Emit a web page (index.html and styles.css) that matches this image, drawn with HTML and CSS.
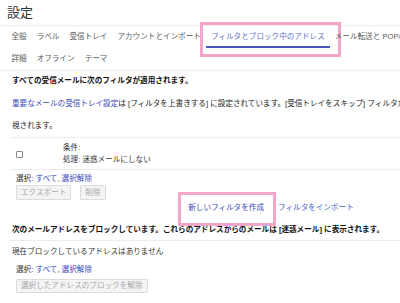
FILE: index.html
```html
<!DOCTYPE html>
<html lang="ja">
<head>
<meta charset="utf-8">
<title>設定</title>
<link rel="stylesheet" href="styles.css">
</head>
<body>
<div class="page">
  <header class="title">設定</header>
  <nav class="tabs">
    <div class="tab-row">
      <span class="tab">全般</span>
      <span class="tab">ラベル</span>
      <span class="tab">受信トレイ</span>
      <span class="tab">アカウントとインポート</span>
      <span class="tab active">フィルタとブロック中のアドレス<span class="mark mark-tab"></span></span>
      <span class="tab">メール転送と POP/IMAP</span>
    </div>
    <div class="tab-row">
      <span class="tab">詳細</span>
      <span class="tab">オフライン</span>
      <span class="tab">テーマ</span>
    </div>
  </nav>

  <section class="section">
    <h2 class="heading">すべての受信メールに次のフィルタが適用されます。</h2>
    <p class="notice"><a class="link">重要なメールの受信トレイ設定</a>は [フィルタを上書きする] に設定されています。[受信トレイをスキップ] フィルタが適用された重要なメールの一部は無<br>視されます。</p>
    <div class="filter-row">
      <span class="checkbox"></span>
      <div class="filter-desc">
        <div>条件:</div>
        <div>処理: 迷惑メールにしない</div>
      </div>
    </div>
    <div class="select">選択: <a class="link">すべて</a>, <a class="link">選択解除</a></div>
    <div class="buttons">
      <button class="btn">エクスポート</button>
      <button class="btn">削除</button>
    </div>
    <div class="actions">
      <a class="link action create">新しいフィルタを作成<span class="mark mark-create"></span></a>
      <a class="link action import">フィルタをインポート</a>
    </div>
  </section>

  <section class="section">
    <h2 class="heading heading-blocked">次のメールアドレスをブロックしています。これらのアドレスからのメールは [迷惑メール] に表示されます。</h2>
    <div class="empty">現在ブロックしているアドレスはありません</div>
    <div class="select select-blocked">選択: <a class="link">すべて</a>, <a class="link">選択解除</a></div>
    <div class="buttons buttons-blocked">
      <button class="btn">選択したアドレスのブロックを解除</button>
    </div>
  </section>
</div>
</body>
</html>
```

FILE: styles.css
```css
html, body {
  margin: 0;
  padding: 0;
  background: #ffffff;
  overflow: hidden;
}

body {
  font-family: "Liberation Sans", "Noto Sans CJK JP", sans-serif;
  font-size: 7.6px;
  color: #222222;
  width: 400px;
  height: 303px;
}

.page {
  width: 542px;
}

.title {
  height: 25px;
  line-height: 25px;
  font-size: 13px;
  padding-left: 7px;
  color: #333333;
  border-bottom: 1px solid #ececec;
}

.tabs {
  padding: 0 6.5px;
  border-bottom: 1px solid #ececec;
}

.tab-row {
  display: flex;
  height: 22px;
}

.tab {
  position: relative;
  padding: 0 5px;
  line-height: 22px;
  color: #5a5a5a;
  white-space: nowrap;
  box-sizing: border-box;
  height: 22px;
}

.tab.active {
  color: #6370cc;
  border-bottom: 2px solid #4454b8;
  line-height: 21px;
}

.mark {
  position: absolute;
  border: 3px solid #f2a7c9;
  box-sizing: border-box;
  pointer-events: none;
}

.mark-tab {
  left: -6px;
  top: -4px;
  width: 141px;
  height: 35px;
}

.section {
  padding: 0 12px;
}

.heading {
  margin: 0;
  font-size: 7.6px;
  font-weight: bold;
  line-height: 20px;
  color: #111111;
}

.notice {
  margin: 2px 0 0;
  line-height: 22px;
  white-space: nowrap;
}

.link {
  color: #3848b8;
  text-decoration: none;
}

.filter-row {
  display: flex;
  align-items: center;
  padding: 4px 0 3px;
  margin-left: -2px;
  padding-left: 2px;
  border-top: 1px solid #ececec;
  border-bottom: 1px solid #ececec;
}

.checkbox {
  width: 7px;
  height: 7px;
  margin-left: 4px;
  border: 1px solid #8a8a8a;
  border-radius: 1px;
  box-sizing: border-box;
  background: #ffffff;
}

.filter-desc {
  margin-left: 40px;
  line-height: 12px;
  color: #333333;
}

.select {
  margin-top: 3px;
  padding-left: 4px;
  line-height: 12px;
  color: #333333;
}

.buttons {
  display: flex;
  gap: 9px;
  padding-left: 4px;
}

.btn {
  height: 15px;
  padding: 0 4px;
  font-family: "Liberation Sans", "Noto Sans CJK JP", sans-serif;
  font-size: 7.6px;
  line-height: 13px;
  color: #a8a8a8;
  background: #f4f4f4;
  border: 1px solid #dcdcdc;
  border-radius: 1px;
}

.actions {
  display: flex;
  justify-content: center;
  gap: 14px;
  margin-top: 1px;
}

.action {
  display: inline-block;
  line-height: 14px;
  position: relative;
}

.import {
  color: #4a5cc4;
}

.mark-create {
  left: -10px;
  right: -12px;
  top: -9px;
  bottom: -11px;
}

.heading-blocked {
  margin-top: 5px;
  line-height: 20px;
  margin-left: -2px;
  padding-left: 2px;
  border-bottom: 1px solid #ececec;
  white-space: nowrap;
}

.empty {
  line-height: 22px;
  color: #333333;
}

.select-blocked {
  margin-top: 1px;
}

.buttons-blocked {
  margin-top: 3px;
}

.buttons-blocked .btn {
  height: 14px;
  line-height: 12px;
}
```
